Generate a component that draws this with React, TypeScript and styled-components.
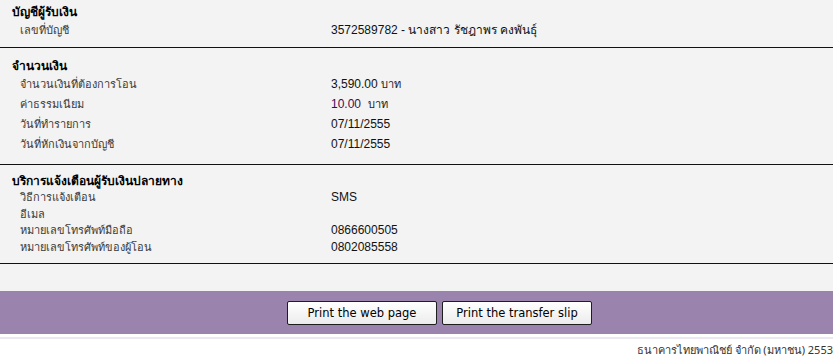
import styled, { createGlobalStyle } from 'styled-components';

const GlobalStyle = createGlobalStyle`
  html, body {
    margin: 0;
    padding: 0;
    background: #ffffff;
  }
  body {
    font-family: Tahoma, "Noto Sans", "Liberation Sans", sans-serif;
    font-size: 12px;
    color: #222;
  }
`;

const Page = styled.div`
  width: 833px;
  display: flex;
  flex-direction: column;
`;

const Panel = styled.div`
  background: #f3f3f3;
  padding-bottom: 27px;
`;

const Section = styled.section<{ $top: number; $bottom: number }>`
  padding: ${(p) => p.$top}px 0 ${(p) => p.$bottom}px;
  border-bottom: 1px solid #111;
`;

const Heading = styled.div`
  padding-left: 12px;
  height: 16px;
  line-height: 16px;
  font-weight: bold;
  font-size: 12px;
  color: #000;
`;

const Row = styled.div<{ $h: number }>`
  display: grid;
  grid-template-columns: 331px 1fr;
  height: ${(p) => p.$h}px;
  line-height: ${(p) => p.$h}px;
`;

const Label = styled.div`
  padding-left: 20px;
  color: #3a3a3a;
  font-size: 11px;
`;

const Value = styled.div<{ $tone?: string }>`
  font-family: "Liberation Sans", Arial, sans-serif;
  font-size: 12px;
  color: ${(p) => p.$tone || '#111'};
`;

const Unit = styled.span`
  font-family: Tahoma, "Noto Sans", sans-serif;
  font-size: 11px;
  color: #222;
`;

const ActionBar = styled.div`
  background: #9a84ae;
  height: 43px;
  display: flex;
  align-items: flex-start;
  gap: 5px;
  padding: 10px 0 0 287px;
  box-sizing: border-box;
`;

const Button = styled.button`
  width: 150px;
  height: 24px;
  background: linear-gradient(#ffffff, #ececec);
  border: 1px solid #1e1e1e;
  border-radius: 2px;
  font-family: "DejaVu Sans", Verdana, sans-serif;
  font-size: 11.5px;
  color: #000;
  padding: 0;
  cursor: pointer;
`;

const Rule = styled.div`
  margin-top: 3px;
  height: 2px;
  background: #ece8f1;
`;

const Footer = styled.div`
  text-align: right;
  padding: 3px 0 0 0;
  font-size: 11px;
  color: #333;
  line-height: 16px;
`;

type Item = { label: string; value?: React.ReactNode; tone?: string };

const recipient: Item[] = [
  { label: 'เลขที่บัญชี', value: '3572589782 - นางสาว รัชฎาพร คงพันธุ์' },
];

const amount: Item[] = [
  { label: 'จำนวนเงินที่ต้องการโอน', value: <>3,590.00 <Unit>บาท</Unit></> },
  { label: 'ค่าธรรมเนียม', value: <>10.00&nbsp; <Unit>บาท</Unit></>, tone: '#3c0a5a' },
  { label: 'วันที่ทำรายการ', value: '07/11/2555' },
  { label: 'วันที่หักเงินจากบัญชี', value: '07/11/2555' },
];

const notify: Item[] = [
  { label: 'วิธีการแจ้งเตือน', value: 'SMS' },
  { label: 'อีเมล' },
  { label: 'หมายเลขโทรศัพท์มือถือ', value: '0866600505' },
  { label: 'หมายเลขโทรศัพท์ของผู้โอน', value: '0802085558' },
];

function Block(props: { title: string; items: Item[]; top: number; bottom: number; rowH: number }) {
  return (
    <Section $top={props.top} $bottom={props.bottom}>
      <Heading>{props.title}</Heading>
      {props.items.map((it, i) => (
        <Row key={i} $h={props.rowH}>
          <Label>{it.label}</Label>
          <Value $tone={it.tone}>{it.value}</Value>
        </Row>
      ))}
    </Section>
  );
}

export default function App() {
  return (
    <Page>
      <GlobalStyle />
      <Panel>
        <Block title="บัญชีผู้รับเงิน" items={recipient} top={4} bottom={7} rowH={20} />
        <Block title="จำนวนเงิน" items={amount} top={10} bottom={10} rowH={20} />
        <Block title="บริการแจ้งเตือนผู้รับเงินปลายทาง" items={notify} top={8} bottom={8} rowH={16.5} />
      </Panel>
      <ActionBar>
        <Button>Print the web page</Button>
        <Button>Print the transfer slip</Button>
      </ActionBar>
      <Rule />
      <Footer>ธนาคารไทยพาณิชย์ จำกัด (มหาชน) 2553</Footer>
    </Page>
  );
}
